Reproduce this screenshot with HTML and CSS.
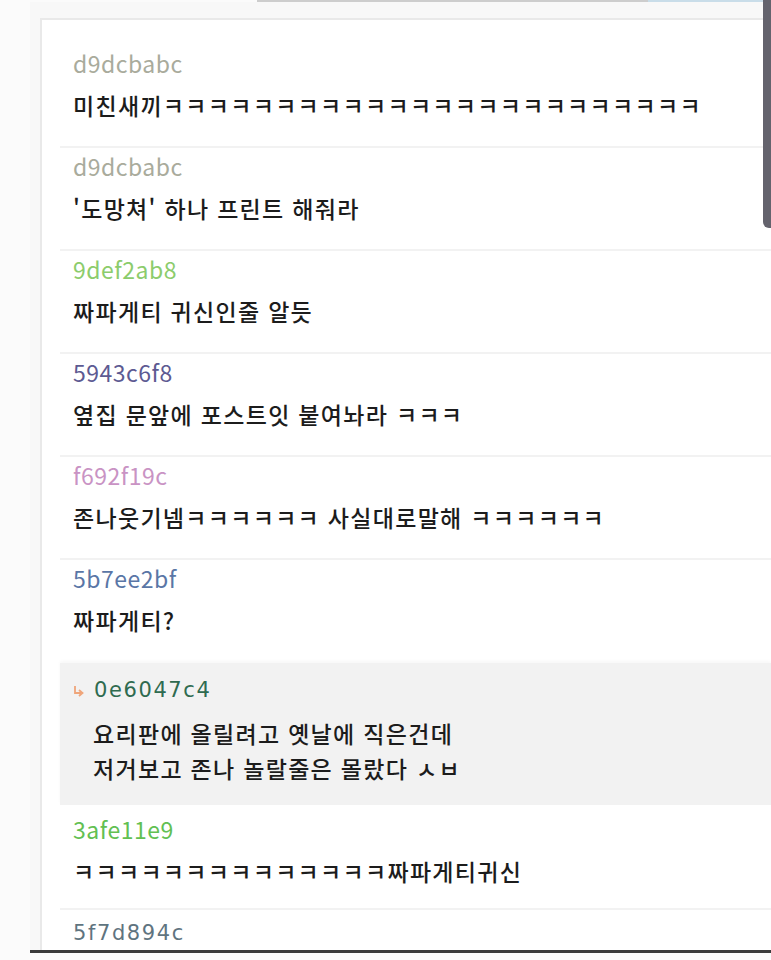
FILE: index.html
```html
<!DOCTYPE html>
<html lang="ko">
<head>
    <meta charset="UTF-8">
    <meta name="viewport" content="width=device-width, initial-scale=1.0">
    <title>댓글</title>
    <link rel="stylesheet" href="styles.css">
</head>
<body>
    <div class="page">
        <div class="topline">
            <span class="seg-gray"></span>
            <span class="seg-blue"></span>
        </div>

        <div class="frame">
            <div class="comments">
                <div class="comment">
                    <div class="nick nick-d9dcba">d9dcbabc</div>
                    <div class="text">미친새끼ㅋㅋㅋㅋㅋㅋㅋㅋㅋㅋㅋㅋㅋㅋㅋㅋㅋㅋㅋㅋㅋㅋㅋㅋ</div>
                </div>
                <div class="comment">
                    <div class="nick nick-d9dcba">d9dcbabc</div>
                    <div class="text">'도망쳐' 하나 프린트 해줘라</div>
                </div>
                <div class="comment">
                    <div class="nick nick-9def2a">9def2ab8</div>
                    <div class="text">짜파게티 귀신인줄 알듯</div>
                </div>
                <div class="comment">
                    <div class="nick nick-5943c6">5943c6f8</div>
                    <div class="text">옆집 문앞에 포스트잇 붙여놔라 ㅋㅋㅋ</div>
                </div>
                <div class="comment">
                    <div class="nick nick-f692f1">f692f19c</div>
                    <div class="text">존나웃기넴ㅋㅋㅋㅋㅋㅋ 사실대로말해 ㅋㅋㅋㅋㅋㅋ</div>
                </div>
                <div class="comment no-line">
                    <div class="nick nick-5b7ee2">5b7ee2bf</div>
                    <div class="text">짜파게티?</div>
                </div>

                <div class="reply">
                    <div class="reply-head">
                        <svg class="reply-icon" width="11" height="12" viewBox="0 0 11 12">
                            <path d="M2 1 V8 H8" fill="none" stroke="#efa57a" stroke-width="1.8"/>
                            <path d="M6 5 L9.5 8 L6 11" fill="none" stroke="#efa57a" stroke-width="1.8"/>
                        </svg>
                        <span class="nick nick-mono nick-0e6047">0e6047c4</span>
                    </div>
                    <div class="reply-text">
                        요리판에 올릴려고 옛날에 직은건데<br>
                        저거보고 존나 놀랄줄은 몰랐다 ㅅㅂ
                    </div>
                </div>

                <div class="comment after-reply">
                    <div class="nick nick-3afe11">3afe11e9</div>
                    <div class="text">ㅋㅋㅋㅋㅋㅋㅋㅋㅋㅋㅋㅋㅋㅋ짜파게티귀신</div>
                </div>
                <div class="comment last">
                    <div class="nick nick-mono nick-5f7d89">5f7d894c</div>
                </div>
            </div>
        </div>

        <div class="scrollbar"></div>
    </div>
</body>
</html>
```

FILE: styles.css
```css
* {
    margin: 0;
    padding: 0;
    box-sizing: border-box;
}
body {
    font-family: "Noto Sans CJK KR", "Noto Sans", sans-serif;
    background: #fbfbfb;
    color: #1c1c1c;
}
.page {
    position: relative;
    width: 771px;
    height: 960px;
    overflow: hidden;
}
.topline {
    display: flex;
    height: 2px;
    padding-left: 257px;
}
.seg-gray {
    width: 391px;
    background: #cdcdcd;
}
.seg-blue {
    flex: 1;
    background: #c9dde9;
}
.frame {
    margin-left: 30px;
    height: 951px;
    border-bottom: 3px solid #3b3b3b;
    overflow: hidden;
    background: #f8f8f8;
}
.comments {
    margin: 16px 0 0 10px;
    background: #fff;
    border: 2px solid #e9e9e9;
    border-right: none;
    padding: 25px 0 0 18px;
    min-height: 1000px;
}
.comment {
    padding: 2px 0 25px 13px;
    border-bottom: 2px solid #f2f2f2;
}
.comment.no-line {
    border-bottom: none;
    padding-bottom: 27px;
}
.comment.after-reply {
    padding-top: 8px;
    padding-bottom: 21px;
}
.comment.last {
    padding-top: 7px;
    border-bottom: none;
}
.nick {
    font-size: 23px;
    line-height: 32px;
    letter-spacing: 0.5px;
}
.nick-mono {
    font-family: "DejaVu Sans", sans-serif;
    font-size: 21px;
    letter-spacing: 1.6px;
}
.nick-d9dcba { color: #a9ab9c; }
.nick-9def2a { color: #8ccc6c; }
.nick-5943c6 { color: #5d5a92; }
.nick-f692f1 { color: #c993c4; }
.nick-5b7ee2 { color: #5a76a6; }
.nick-0e6047 { color: #2f6b50; }
.nick-3afe11 { color: #62c052; }
.nick-5f7d89 { color: #5f7480; }
.text {
    margin-top: 10px;
    font-size: 23px;
    line-height: 32px;
    letter-spacing: 1.3px;
    font-weight: 500;
    white-space: nowrap;
}
.reply {
    background: #f2f2f2;
    padding: 11px 0 19px 13px;
    box-shadow: 0 -2px 3px rgba(0,0,0,0.03);
}
.reply-head {
    display: flex;
    align-items: center;
    gap: 10px;
}
.reply-icon {
    margin-top: 2px;
}
.reply-text {
    margin-top: 10px;
    padding-left: 20px;
    font-size: 23px;
    line-height: 35px;
    letter-spacing: 1.3px;
    font-weight: 500;
    white-space: nowrap;
}
.scrollbar {
    position: absolute;
    top: 0;
    right: 0;
    width: 8px;
    height: 228px;
    background: #64636d;
    border-bottom-left-radius: 6px;
}
```
